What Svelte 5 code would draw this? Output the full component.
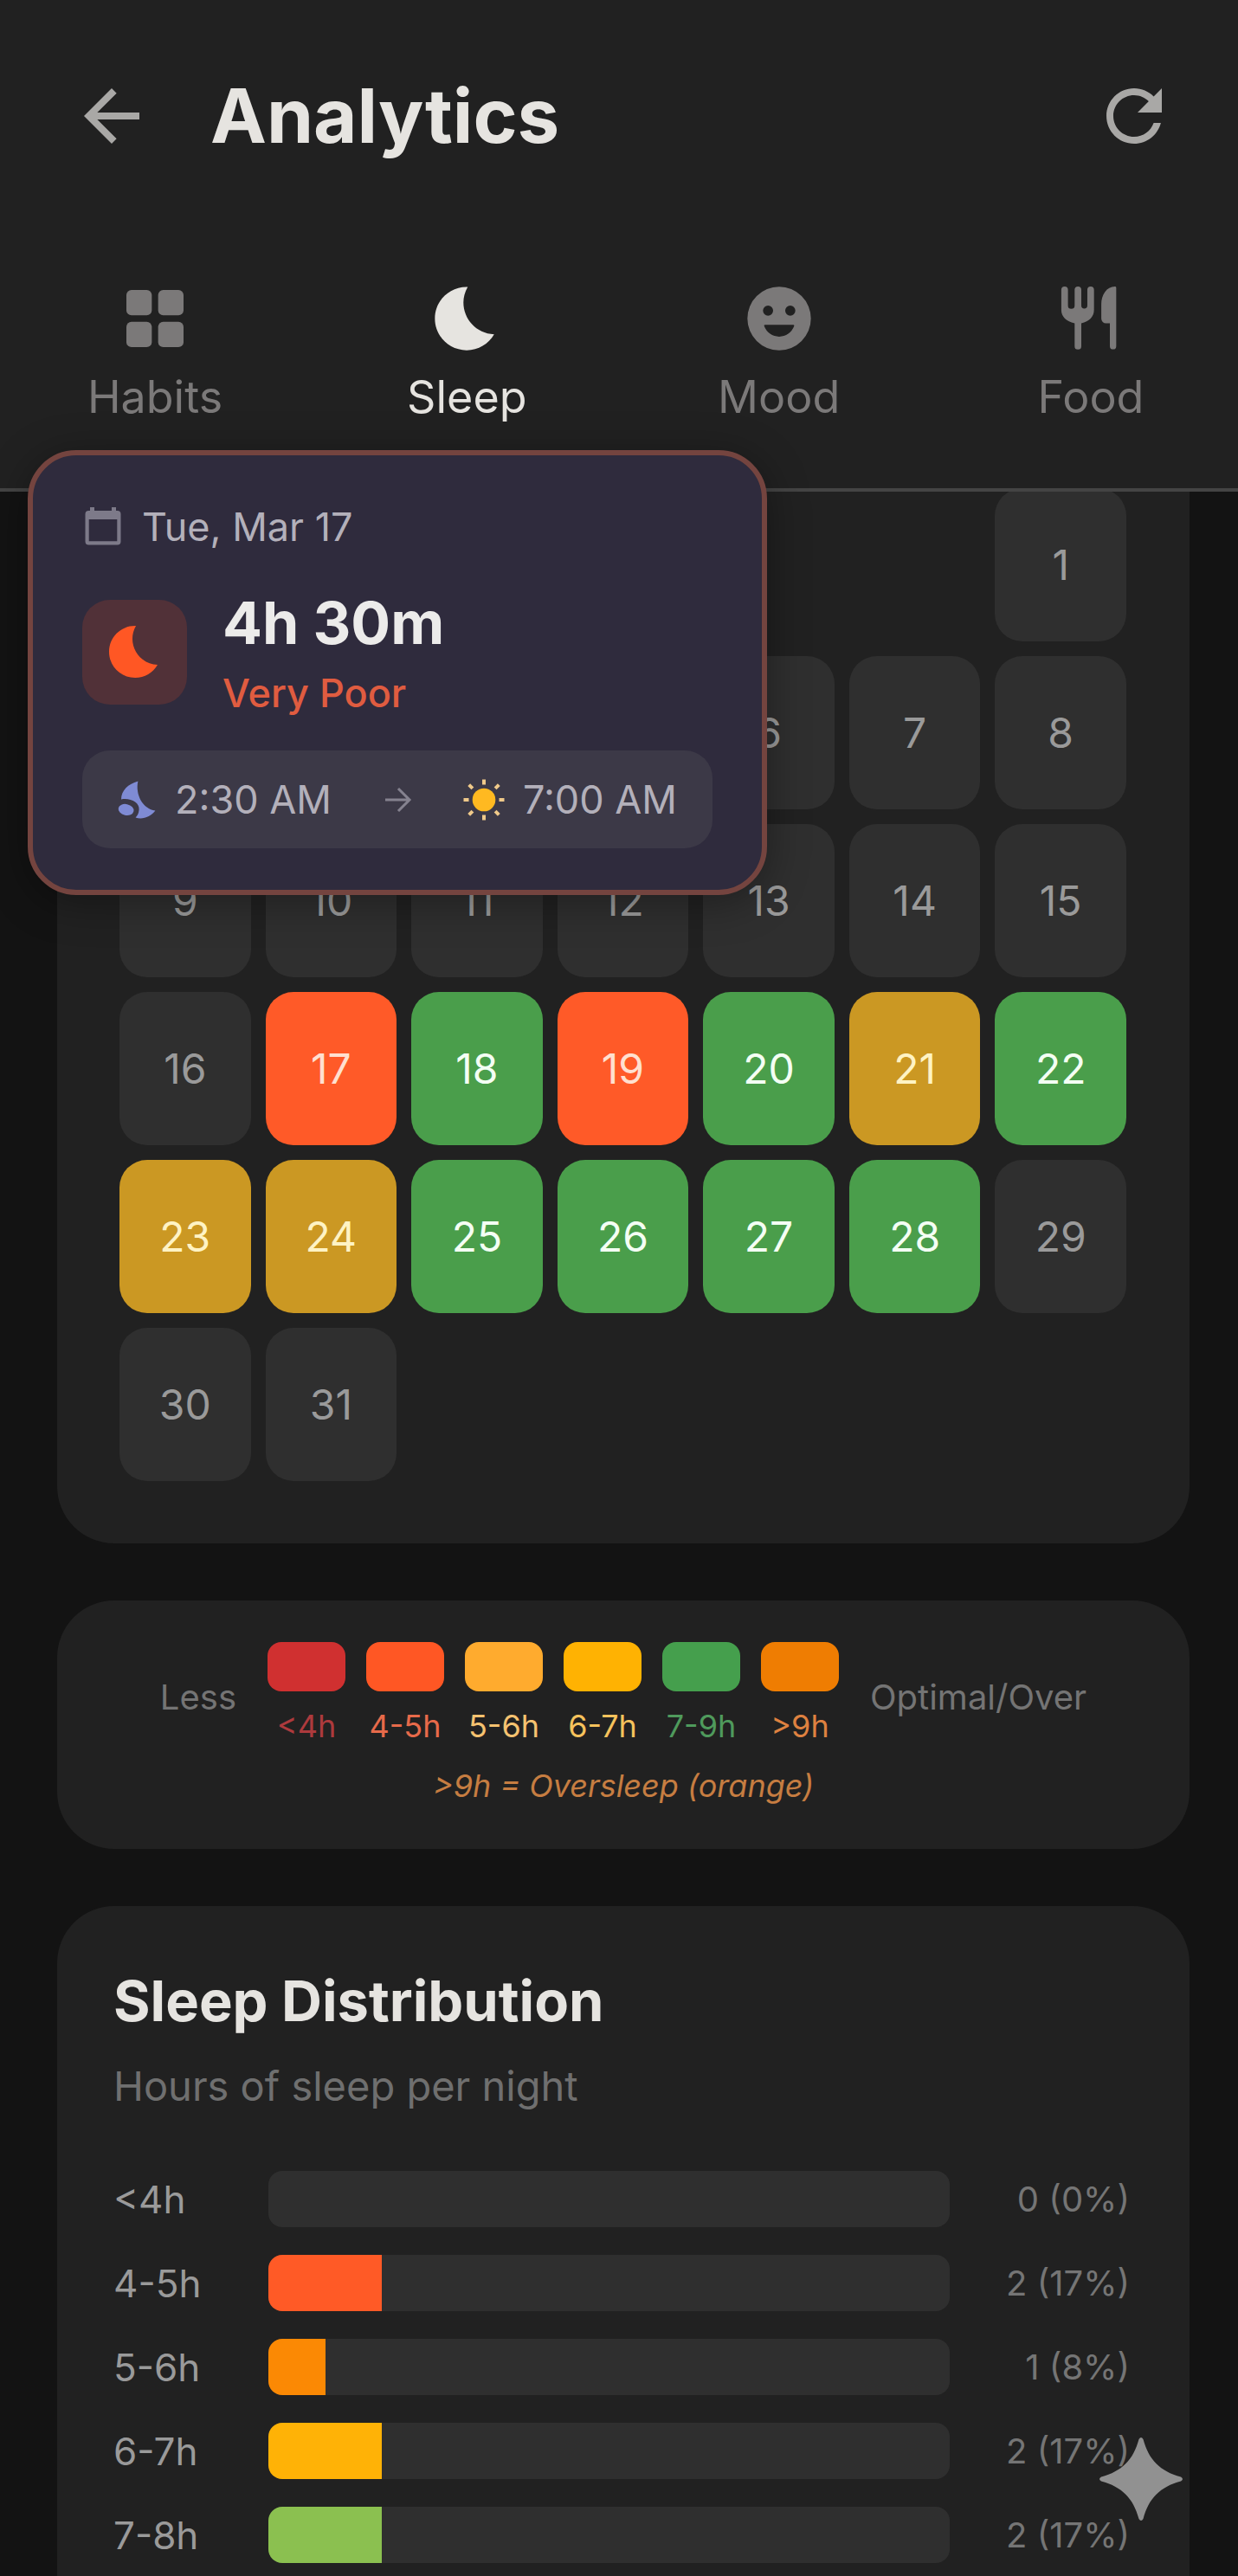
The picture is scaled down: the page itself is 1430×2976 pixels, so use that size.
<script lang="ts">
  type Day = { n: number; tone: string };

  const tabs = ['Habits', 'Sleep', 'Mood', 'Food'];
  let activeTab = $state('Sleep');

  // March starts on the last column of the week
  const leadingBlanks = 6;
  const logged: Record<number, string> = {
    17: 'poor', 18: 'good', 19: 'poor', 20: 'good', 21: 'fair', 22: 'good',
    23: 'fair', 24: 'fair', 25: 'good', 26: 'good', 27: 'good', 28: 'good'
  };
  const days: Day[] = Array.from({ length: 31 }, (_, i) => ({
    n: i + 1,
    tone: logged[i + 1] ?? 'none'
  }));

  const legend = [
    { label: '<4h', tone: 'l4' },
    { label: '4-5h', tone: 'l45' },
    { label: '5-6h', tone: 'l56' },
    { label: '6-7h', tone: 'l67' },
    { label: '7-9h', tone: 'l79' },
    { label: '>9h', tone: 'l9' }
  ];

  const total = 12;
  const distribution = [
    { label: '<4h', count: 0, color: '#d32f2f' },
    { label: '4-5h', count: 2, color: '#ff5a26' },
    { label: '5-6h', count: 1, color: '#fb8904' },
    { label: '6-7h', count: 2, color: '#ffb206' },
    { label: '7-8h', count: 2, color: '#8bc050' }
  ];
</script>

{#snippet moon()}
  <svg viewBox="0 0 24 24" aria-hidden="true">
    <path d="M12.34 2.02C6.59 1.82 2 6.42 2 12c0 5.52 4.48 10 10 10 3.71 0 6.93-2.02 8.66-5.02-7.51-.25-12.09-8.43-8.32-14.96z" />
  </svg>
{/snippet}

<div class="screen">
  <header class="header">
    <div class="bar">
      <button class="icon-button" type="button" aria-label="Back">
        <svg viewBox="0 0 24 24"><path d="M20 11H7.83l5.59-5.59L12 4l-8 8 8 8 1.41-1.41L7.83 13H20v-2z" /></svg>
      </button>
      <h1>Analytics</h1>
      <button class="icon-button" type="button" aria-label="Refresh">
        <svg viewBox="0 0 24 24"><path d="M17.65 6.35C16.2 4.9 14.21 4 12 4c-4.42 0-7.99 3.58-7.99 8s3.57 8 7.99 8c3.73 0 6.84-2.55 7.73-6h-2.08c-.82 2.33-3.04 4-5.65 4-3.31 0-6-2.69-6-6s2.69-6 6-6c1.66 0 3.14.69 4.22 1.78L13 11h7V4l-2.35 2.35z" /></svg>
      </button>
    </div>

    <nav class="tabs" aria-label="Analytics sections">
      {#each tabs as tab}
        <button type="button" class="tab" class:active={tab === activeTab} onclick={() => (activeTab = tab)}>
          {#if tab === 'Habits'}
            <svg viewBox="0 0 24 24">
              <rect x="3" y="3" width="8" height="8" rx="1.6" />
              <rect x="13" y="3" width="8" height="8" rx="1.6" />
              <rect x="3" y="13" width="8" height="8" rx="1.6" />
              <rect x="13" y="13" width="8" height="8" rx="1.6" />
            </svg>
          {:else if tab === 'Sleep'}
            {@render moon()}
          {:else if tab === 'Mood'}
            <svg viewBox="0 0 24 24">
              <path fill-rule="evenodd" d="M12 2a10 10 0 1 0 0 20 10 10 0 0 0 0-20zM8.5 7.900a1.600 1.600 0 1 1 0 3.200 1.600 1.600 0 0 1 0-3.200zM15.500 7.900a1.600 1.600 0 1 1 0 3.200 1.600 1.600 0 0 1 0-3.200zM7.500 14h9c.2 0 .3.2.2.4a5 5 0 0 1-9.400 0c-.1-.2 0-.4.2-.4z" />
            </svg>
          {:else}
            <svg viewBox="0 0 24 24">
              <path d="M2.700 2.950a1.050 1.050 0 0 1 2.100 0V7.900a1.050 1.050 0 0 0 2.100 0V2.950a1.050 1.050 0 0 1 2.100 0V7.900a.95.95 0 0 0 1.900 0V2.950a1.050 1.050 0 0 1 2.100 0V9.300c0 2.200-1.500 3.600-4 4.200v7.200a1.050 1.050 0 0 1-2.100 0v-7.200c-2.600-.6-4.200-2-4.200-4.200z" />
              <path d="M19.600 1.900a.4.4 0 0 1 .4.4v18.400a1 1 0 0 1-2 0v-7.200h-1.200a1.500 1.500 0 0 1-1.500-1.500V7.500c0-3 1.700-5.600 4.300-5.600z" />
            </svg>
          {/if}
          <span>{tab}</span>
        </button>
      {/each}
    </nav>
  </header>

  <main class="content">
    <section class="card calendar" aria-label="March sleep calendar">
      {#each Array(leadingBlanks) as _}
        <span></span>
      {/each}
      {#each days as day}
        <button type="button" class="day {day.tone}">{day.n}</button>
      {/each}
    </section>

    <section class="card legend" aria-label="Legend">
      <div class="scale">
        <span class="scale-end">Less</span>
        <ul class="swatches">
          {#each legend as item}
            <li class={item.tone}>
              <i class="swatch"></i>
              <span>{item.label}</span>
            </li>
          {/each}
        </ul>
        <span class="scale-end">Optimal/Over</span>
      </div>
      <p class="note">&gt;9h = Oversleep (orange)</p>
    </section>

    <section class="card distribution">
      <h2>Sleep Distribution</h2>
      <p class="subtitle">Hours of sleep per night</p>
      <ul class="bars">
        {#each distribution as row}
          <li>
            <span class="range">{row.label}</span>
            <div class="track">
              <div class="fill" style="width: {(row.count / total) * 100}%; background: {row.color}"></div>
            </div>
            <span class="count">{row.count} ({Math.round((row.count / total) * 100)}%)</span>
          </li>
        {/each}
      </ul>
    </section>
  </main>

  <!-- Detail bubble for the selected night -->
  <aside class="popup" aria-label="Night details">
    <div class="date">
      <svg viewBox="0 0 48 48" aria-hidden="true">
        <path fill-rule="evenodd" d="M9 1h5v4h20V1h5v4h1.500a4 4 0 0 1 4 4v31.500a4 4 0 0 1-4 4h-33a4 4 0 0 1-4-4V9a4 4 0 0 1 4-4H9zM7.700 15v25.200h32.600V15z" />
      </svg>
      <span>Tue, Mar 17</span>
    </div>
    <div class="summary">
      <div class="tile">{@render moon()}</div>
      <div class="summary-text">
        <strong>4h 30m</strong>
        <span>Very Poor</span>
      </div>
    </div>
    <div class="times">
      <div class="time bed">
        <svg viewBox="0 0 24 24" aria-hidden="true">
          <path d="M13.200 1.200C7.500 2.800 3.500 6.500 3.500 11.700c5.500-.9 10.700 1.800 10.300 6.100-.2 2.200-1 3.500-2 4.500 4.200 1.300 8.700-.5 11.400-4C16 17.200 11.500 9 13.200 1.200z" />
          <ellipse cx="6.300" cy="17.700" rx="4.500" ry="3.200" transform="rotate(12 6.300 17.700)" />
        </svg>
        <span>2:30 AM</span>
      </div>
      <svg class="arrow" viewBox="0 0 48 48" aria-hidden="true">
        <path d="M10 24h28M25 11l13 13-13 13" />
      </svg>
      <div class="time wake">
        <svg viewBox="0 0 48 48" aria-hidden="true">
          <circle cx="24" cy="24" r="13.300" />
          <path d="M24 .5v6M24 41.500v6M.5 24h6M41.500 24h6M6.700 6.700l4.200 4.200M37.100 37.100l4.200 4.200M6.700 41.300l4.200-4.200M37.100 10.900l4.200-4.200" />
        </svg>
        <span>7:00 AM</span>
      </div>
    </div>
  </aside>

  <button class="spark" type="button" aria-label="Assistant">
    <svg viewBox="0 0 96 96"><path d="M45.500 2Q48-2 50.500 2C57 26 70 39 94 45.500Q98 48 94 50.500C70 57 57 70 50.500 94Q48 98 45.500 94C39 70 26 57 2 50.500Q-2 48 2 45.500C26 39 39 26 45.500 2z" /></svg>
  </button>
</div>

<style>
  :global(body) {
    background: #131313;
  }

  .screen {
    position: relative;
    display: flex;
    flex-direction: column;
    min-height: 100vh;
    overflow: hidden;
    color: #9a9a9a;
    font-family: Inter, Roboto, sans-serif;
    font-size: 44px;
  }

  button {
    padding: 0;
    border: 0;
    background: none;
    color: inherit;
    font: inherit;
    cursor: pointer;
  }

  svg {
    display: block;
    flex-shrink: 0;
    fill: currentColor;
  }

  h1,
  h2,
  p,
  ul {
    margin: 0;
    padding: 0;
  }

  ul {
    list-style: none;
  }

  /* Header */
  .header {
    position: relative;
    z-index: 1;
    padding: 86px 0 73px;
    border-bottom: 4px solid #444;
    background: #212121;
  }

  .bar {
    display: flex;
    align-items: center;
    padding: 0 72px 0 81px;
  }

  .icon-button svg {
    width: 96px;
    height: 96px;
    color: #a9a8a6;
  }

  h1 {
    flex: 1;
    margin-left: 66px;
    color: #e6e4e0;
    font-size: 87px;
    font-weight: 700;
    line-height: 96px;
  }

  .tabs {
    display: flex;
    justify-content: space-between;
    padding: 142px 90px 0 99px;
  }

  .tab {
    display: flex;
    flex-direction: column;
    align-items: center;
    gap: 15px;
    width: 160px;
    color: #7b7979;
    font-size: 52px;
    line-height: 64px;
  }

  .tab svg {
    width: 88px;
    height: 88px;
  }

  .tab.active {
    color: #e6e4e0;
  }

  /* Cards */
  .content {
    display: flex;
    flex: 1;
    flex-direction: column;
    gap: 66px;
    padding: 0 56px 0 66px;
  }

  .card {
    border-radius: 66px;
    background: #212121;
  }

  /* The month is scrolled up under the header */
  .calendar {
    display: grid;
    grid-template-columns: repeat(7, 1fr);
    gap: 17px;
    margin-top: -4px;
    padding: 0 73px 72px 72px;
    border-radius: 0 0 66px 66px;
  }

  .day {
    height: 177px;
    border-radius: 32px;
    background: #2f2f2f;
    color: #9a9a9a;
    font-size: 48px;
  }

  .day.poor {
    background: #ff5a28;
    color: #ffe0d0;
  }

  .day.good {
    background: #4a9e4b;
    color: #f4fff4;
  }

  .day.fair {
    background: #cb9823;
    color: #fff3c4;
  }

  /* Legend */
  .legend {
    display: flex;
    flex-direction: column;
    align-items: center;
    gap: 18px;
    padding: 48px 0 51px;
    font-size: 36px;
  }

  .scale {
    display: flex;
    align-items: center;
    gap: 36px;
  }

  .scale-end {
    color: #747474;
    font-size: 40px;
  }

  .swatches {
    display: flex;
    gap: 24px;
  }

  .swatches li {
    display: flex;
    flex-direction: column;
    align-items: center;
    gap: 12px;
    width: 90px;
    line-height: 57px;
  }

  .swatch {
    width: 100%;
    height: 57px;
    border-radius: 16px;
    background: currentColor;
  }

  .l4 { color: #d03030; }
  .l45 { color: #ff5724; }
  .l56 { color: #ffab2e; }
  .l67 { color: #ffb202; }
  .l79 { color: #459f4d; }
  .l9 { color: #ef7d02; }

  .l4 span { color: #ad3a3d; }
  .l45 span { color: #e76a4a; }
  .l56 span { color: #f5c270; }
  .l67 span { color: #f5c25c; }
  .l79 span { color: #4f9a5c; }
  .l9 span { color: #de8140; }

  .note {
    color: #c67d41;
    font-style: italic;
    line-height: 44px;
  }

  /* Distribution */
  .distribution {
    flex: 1;
    padding: 72px 69px 15px 65px;
    border-radius: 66px 66px 0 0;
  }

  h2 {
    color: #e6e4e0;
    font-size: 65px;
    font-weight: 700;
    line-height: 76px;
  }

  .subtitle {
    margin: 30px 0 68px;
    color: #6f6f6f;
    font-size: 47px;
    line-height: 60px;
  }

  .bars {
    display: flex;
    flex-direction: column;
    gap: 32px;
  }

  .bars li {
    display: grid;
    grid-template-columns: 179px 1fr 208px;
    align-items: center;
  }

  .track {
    height: 65px;
    overflow: hidden;
    border-radius: 16px;
    background: #2f2f2f;
  }

  .fill {
    height: 100%;
  }

  .count {
    color: #757575;
    font-size: 40px;
    text-align: right;
  }

  /* Popup */
  .popup {
    position: absolute;
    z-index: 2;
    top: 520px;
    left: 32px;
    display: flex;
    flex-direction: column;
    gap: 38px;
    width: 854px;
    box-sizing: border-box;
    padding: 53px 57px 48px;
    border: 6px solid #74443f;
    border-radius: 56px;
    background: #2f2b3d;
    box-shadow: 0 8px 48px rgba(0, 0, 0, 0.35);
    font-size: 45px;
  }

  .date {
    display: flex;
    align-items: center;
    gap: 21px;
    color: #b3b0ba;
    line-height: 60px;
  }

  .date svg {
    width: 48px;
    height: 48px;
    color: #7d7a89;
  }

  .summary {
    display: flex;
    align-items: center;
    gap: 41px;
  }

  .tile {
    display: grid;
    place-items: center;
    width: 121px;
    height: 121px;
    border-radius: 32px;
    background: #513138;
    color: #ff5724;
  }

  .tile svg {
    width: 72px;
    height: 72px;
  }

  .summary-text {
    display: flex;
    flex-direction: column;
    gap: 12px;
    color: #e05c40;
    font-weight: 500;
    line-height: 56px;
  }

  .summary-text strong {
    color: #ecebea;
    font-size: 68px;
    font-weight: 700;
    line-height: 84px;
  }

  .times {
    display: flex;
    align-items: center;
    justify-content: space-between;
    height: 113px;
    padding: 0 41px 0 38px;
    border-radius: 32px;
    background: #3c3947;
  }

  .time {
    display: flex;
    align-items: center;
    gap: 21px;
    color: #b3b0ba;
  }

  .time svg,
  .arrow {
    width: 48px;
    height: 48px;
  }

  .bed svg {
    color: #7f8bd4;
  }

  .wake svg {
    color: #ffb921;
  }

  .wake path {
    stroke: #efc98a;
    stroke-width: 4;
  }

  .arrow {
    fill: none;
    stroke: #85828f;
    stroke-width: 3;
  }

  .spark {
    position: fixed;
    z-index: 3;
    right: 64px;
    bottom: 64px;
    color: #919191;
  }

  .spark svg {
    width: 96px;
    height: 96px;
  }
</style>
